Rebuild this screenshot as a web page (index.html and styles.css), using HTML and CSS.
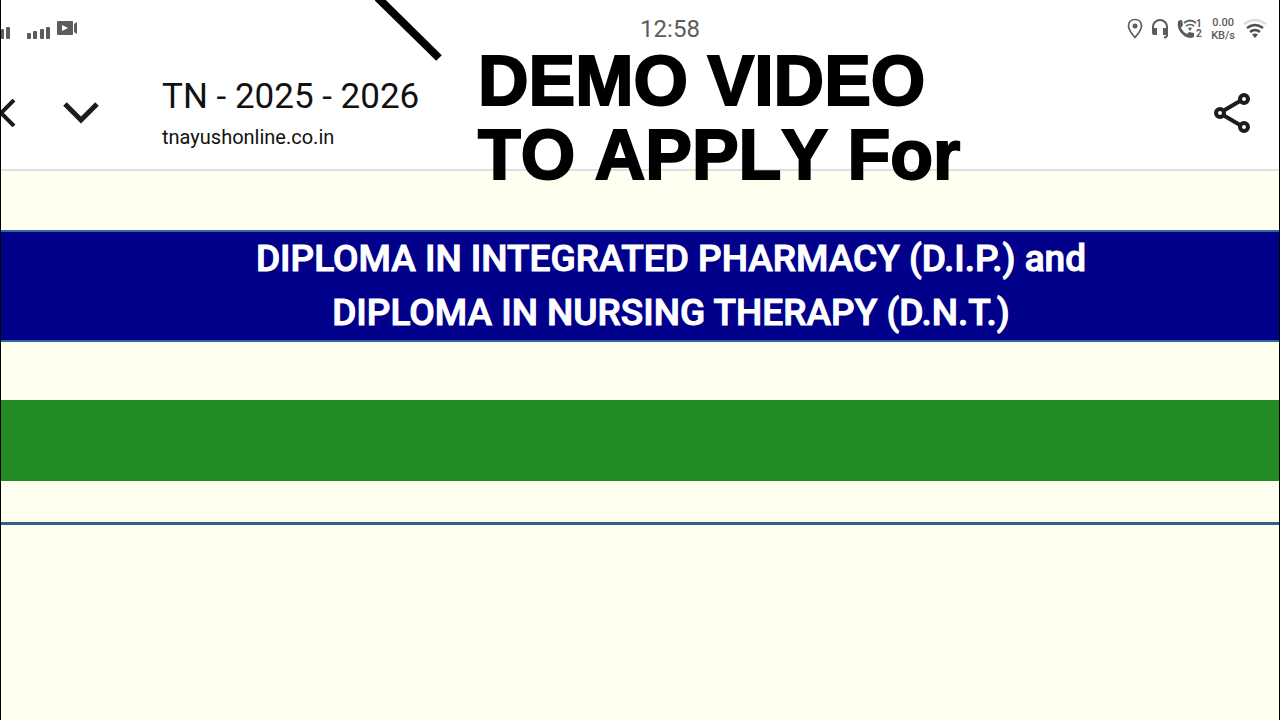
FILE: index.html
```html
<!DOCTYPE html>
<html lang="en">
<head>
    <meta charset="UTF-8">
    <meta name="viewport" content="width=device-width, initial-scale=1.0">
    <title>TN - 2025 - 2026</title>
    <link rel="stylesheet" href="styles.css">
</head>
<body>

    <!-- Phone status bar -->
    <div class="status-bar">
        <div class="status-left">
            <svg width="80" height="24" viewBox="0 0 80 24" fill="#5c5c5c" aria-hidden="true">
                <rect x="0" y="12" width="3" height="10" rx="1"/>
                <rect x="5" y="10" width="4" height="12" rx="1"/>
                <rect x="26" y="16" width="4" height="6" rx="1"/>
                <rect x="32" y="14" width="4" height="8" rx="1"/>
                <rect x="39" y="12" width="4" height="10" rx="1"/>
                <rect x="45" y="10" width="4" height="12" rx="1"/>
                <path fill-rule="evenodd" d="M57 4h14q1 0 1 1v12q0 1-1 1H57q-1 0-1-1V5q0-1 1-1zM61 8v6l6-3z"/>
                <path d="M73 7l3-2v12l-3-2z"/>
            </svg>
        </div>
        <div class="clock">12:58</div>
        <div class="status-right">
            <svg width="16" height="22" viewBox="0 0 16 22" aria-hidden="true">
                <path d="M8 1.500C4 1.500 1.500 4.300 1.500 8C1.500 12 8 19.500 8 19.500S14.500 12 14.500 8C14.500 4.300 12 1.500 8 1.500z" fill="none" stroke="#5c5c5c" stroke-width="1.700"/>
                <circle cx="8" cy="8" r="2.500" fill="#5c5c5c"/>
            </svg>
            <svg width="18" height="22" viewBox="0 0 18 22" aria-hidden="true">
                <path d="M2 12V9a7 7 0 0 1 14 0v8q0 2.500-3 2.500" fill="none" stroke="#5c5c5c" stroke-width="2"/>
                <path d="M1 10h5v7H3q-2 0-2-2zM12 10h5v7h-5z" fill="#5c5c5c"/>
            </svg>
            <svg width="26" height="22" viewBox="0 0 26 22" aria-hidden="true">
                <path d="M1 3q2-1 4-1l1 5-2 3q2 4 6 6l2-2 5 1v4q-2 1-4 1Q6 19 2 12Q0 8 1 3z" fill="#5c5c5c"/>
                <path d="M7 5q6-5 12 0M9 8q4-3 8 0" fill="none" stroke="#5c5c5c" stroke-width="1.700"/>
                <path d="M11 10q2-1 4 0l-2 3z" fill="#5c5c5c"/>
                <text x="19" y="9" class="sim">1</text>
                <text x="19" y="19" class="sim">2</text>
            </svg>
            <div class="speed">0.00<br>KB/s</div>
            <svg width="24" height="22" viewBox="0 0 24 22" fill="none" stroke="#4f4f4f" stroke-width="2.600" aria-hidden="true">
                <path d="M1 6q11-8 22 0" stroke="#dedede"/>
                <path d="M4 10q8-6 16 0M7 14q5-4 10 0"/>
                <path d="M9 16.500q3-2 6 0l-3 3.500z" fill="#4f4f4f" stroke="none"/>
            </svg>
        </div>
    </div>

    <!-- Browser toolbar -->
    <header class="toolbar">
        <button class="close-btn" aria-label="Close">
            <svg width="16" height="28" viewBox="0 0 16 28" fill="none" stroke="#1c1c1c" stroke-width="4">
                <path d="M13 1L0 14L13 27"/>
            </svg>
        </button>
        <button class="down-btn" aria-label="Minimize">
            <svg width="36" height="24" viewBox="0 0 36 24" fill="none" stroke="#1c1c1c" stroke-width="5">
                <path d="M2 3L18 19L34 3"/>
            </svg>
        </button>
        <div class="page-info">
            <div class="page-title">TN - 2025 - 2026</div>
            <div class="page-url">tnayushonline.co.in</div>
        </div>
        <button class="share-btn" aria-label="Share">
            <svg width="38" height="42" viewBox="0 0 38 42" fill="none" stroke="#1c1c1c" stroke-width="4">
                <path d="M10 19L27 9M10 23L27 33"/>
                <circle cx="7" cy="21" r="4"/>
                <circle cx="31" cy="7" r="4"/>
                <circle cx="31" cy="35" r="4"/>
            </svg>
        </button>
    </header>

    <main>
        <h1 class="course-title">DIPLOMA IN INTEGRATED PHARMACY (D.I.P.) and<br>DIPLOMA IN NURSING THERAPY (D.N.T.)</h1>
        <div class="green-bar"></div>
        <hr>
    </main>

    <!-- Caption over the video -->
    <svg class="pointer" width="68" height="64" viewBox="0 0 68 64" aria-hidden="true">
        <path d="M1 -4L64 58" stroke="#000" stroke-width="8"/>
    </svg>
    <div class="caption">DEMO VIDEO<br>TO APPLY For</div>

</body>
</html>
```

FILE: styles.css
```css
* {
    box-sizing: border-box;
}

body {
    margin: 0;
    min-height: 100vh;
    position: relative;
    font-family: Roboto, "Liberation Sans", sans-serif;
    background-color: #fffff0;
    border-left: 1px solid #000;
    border-right: 1px solid #000;
}

svg {
    display: block;
}

.status-bar {
    display: grid;
    grid-template-columns: 1fr auto 1fr;
    align-items: center;
    height: 56px;
    padding: 2px 12px 0 0;
    background-color: #fff;
    color: #5c5c5c;
}

.clock {
    font-size: 24px;
    line-height: 28px;
    padding-left: 72px;
}

.status-right {
    display: flex;
    justify-content: flex-end;
    align-items: center;
    gap: 8px;
}

.sim {
    font-size: 10px;
    font-weight: bold;
    fill: #5c5c5c;
}

.speed {
    font-size: 11px;
    line-height: 13px;
    font-weight: 500;
    text-align: center;
}

.toolbar {
    display: flex;
    align-items: center;
    height: 115px;
    padding-right: 28px;
    background-color: #fff;
    border-bottom: 2px solid #e0e0e0;
    color: #111;
}

.toolbar button {
    padding: 0;
    border: 0;
    background: none;
}

.down-btn {
    margin-left: 46px;
}

.page-info {
    flex: 1;
    margin-left: 63px;
    padding-top: 4px;
}

.page-title {
    font-size: 35px;
    line-height: 44px;
}

.page-url {
    font-size: 20px;
    line-height: 36px;
}

.course-title {
    margin: 59px 0 58px;
    padding-left: 62px;
    background-color: #00008b;
    color: #fff;
    border-top: 2px solid #336699;
    border-bottom: 2px solid #336699;
    font-size: 37px;
    line-height: 54px;
    font-weight: 500;
    -webkit-text-stroke: 1px #fff;
    text-align: center;
}

.green-bar {
    height: 81px;
    background-color: #228b22;
}

hr {
    margin: 41px 0 0;
    border: 0;
    border-top: 3px solid #336088;
}

.pointer {
    position: absolute;
    top: 0;
    left: 374px;
}

.caption {
    position: absolute;
    top: 44px;
    left: 477px;
    font-family: "Liberation Sans", Arial, sans-serif;
    font-size: 70px;
    line-height: 74px;
    font-weight: bold;
    font-kerning: none;
    -webkit-text-stroke: 2px #000;
    color: #000;
    white-space: nowrap;
}
```
